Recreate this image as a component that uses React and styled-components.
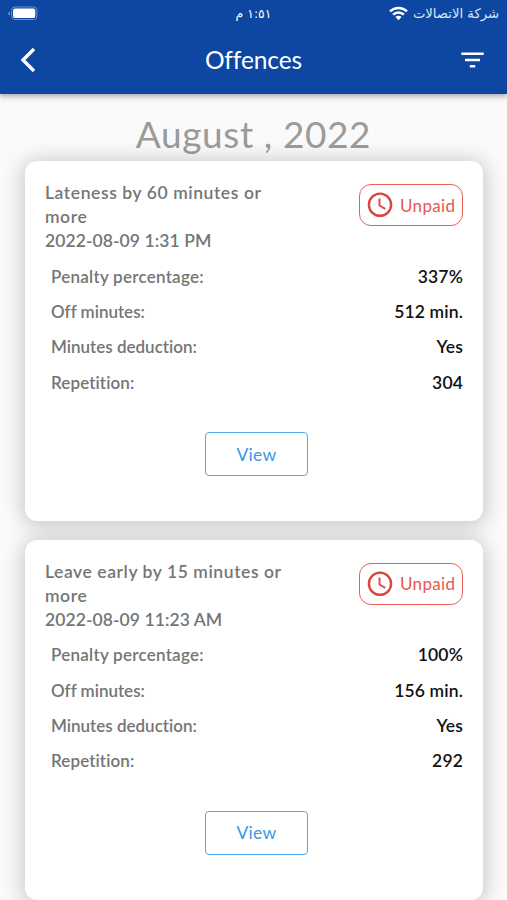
import React from 'react';
import styled, { createGlobalStyle } from 'styled-components';

const GlobalStyle = createGlobalStyle`
  * {
    box-sizing: border-box;
  }

  body {
    margin: 0;
    background: #fafafa;
    font-family: Lato, 'Noto Sans', sans-serif;
    font-variant-ligatures: none;
  }
`;

const Screen = styled.div`
  width: 507px;
  height: 900px;
  overflow: hidden;
  background: #fafafa;
`;

const TopBar = styled.header`
  position: relative;
  height: 94px;
  background: #0d47a1;
  color: #fff;
  box-shadow: 0 2px 4px rgba(0, 0, 0, 0.2), 0 4px 6px rgba(0, 0, 0, 0.12);
`;

const StatusBar = styled.div`
  display: grid;
  grid-template-columns: 1fr auto 1fr;
  align-items: center;
  height: 27px;
  padding: 0 8px 0 8px;
  color: #dbe8fb;
  font-family: 'DejaVu Sans', sans-serif;
`;

const Clock = styled.span`
  color: #fff;
  font-size: 12.5px;
  line-height: 27px;
`;

const Carrier = styled.div`
  display: flex;
  align-items: center;
  justify-content: flex-end;
  gap: 5px;
  font-size: 13.2px;
  line-height: 27px;
  white-space: nowrap;
`;

const Toolbar = styled.div`
  display: grid;
  grid-template-columns: 60px 1fr 60px;
  align-items: center;
  height: 65px;
`;

const IconButton = styled.button`
  display: flex;
  justify-content: ${({ $end }) => ($end ? 'flex-end' : 'flex-start')};
  padding: ${({ $end }) => ($end ? '0 23px 0 0' : '0 0 0 20px')};
  border: 0;
  background: none;
  color: #fff;
`;

const PageTitle = styled.h1`
  margin: 0;
  font-size: 24.5px;
  font-weight: 400;
  line-height: 32px;
  letter-spacing: -0.1px;
  text-align: center;
`;

const Month = styled.h2`
  height: 67px;
  margin: 0;
  padding-top: 17px;
  color: #9b9b9b;
  font-size: 37px;
  font-weight: 400;
  line-height: 46px;
  letter-spacing: 0.6px;
  text-align: center;
`;

const CardList = styled.main`
  display: flex;
  flex-direction: column;
  gap: 18.5px;
  padding: 0 24px 0 25px;
`;

const Card = styled.article`
  height: 360.3px;
  flex-shrink: 0;
  padding: 20px;
  border-radius: 12px;
  background: #fff;
  box-shadow: 0 2px 20px 3px rgba(0, 0, 0, 0.2);
`;

const CardHead = styled.div`
  display: flex;
  justify-content: space-between;
  align-items: flex-start;
  height: 77.5px;
  color: #757575;
`;

const Summary = styled.div`
  width: 246px;
  font-size: 17.5px;
  font-weight: 600;
  line-height: 24px;
`;

const Offence = styled.div`
  letter-spacing: ${({ $spacing }) => $spacing}px;
`;

const Status = styled.div`
  display: flex;
  align-items: center;
  gap: 7.5px;
  width: 104.5px;
  height: 42px;
  margin-top: 3px;
  padding-left: 7px;
  border: 1.3px solid #ec5f56;
  border-radius: 12px;
  color: #e9574e;
  font-size: 17px;
  letter-spacing: 0.35px;
`;

const Row = styled.div`
  display: flex;
  justify-content: space-between;
  height: 35.4px;
  padding-left: 6px;
  color: #757575;
  font-size: 17px;
  font-weight: 600;
  line-height: 35px;
`;

const Label = styled.span`
  letter-spacing: ${({ $spacing }) => $spacing}px;
`;

const Value = styled.span`
  color: #111;
  font-size: 17.5px;
  letter-spacing: 0.15px;
`;

const ViewButton = styled.button`
  display: block;
  width: 103px;
  height: 44px;
  margin: 32px auto 0 160px;
  padding: 0;
  border: 1.5px solid #55a9ea;
  border-radius: 4px;
  background: #fff;
  color: #3b98e0;
  font-family: inherit;
  font-size: 17.5px;
  letter-spacing: 0.3px;
`;

const offences = [
  {
    title: 'Lateness by 60 minutes or more',
    titleSpacing: 0.58,
    date: '2022-08-09 1:31 PM',
    rows: [
      ['Penalty percentage:', '337%'],
      ['Off minutes:', '512 min.'],
      ['Minutes deduction:', 'Yes'],
      ['Repetition:', '304'],
    ],
  },
  {
    title: 'Leave early by 15 minutes or more',
    titleSpacing: 0.57,
    date: '2022-08-09 11:23 AM',
    rows: [
      ['Penalty percentage:', '100%'],
      ['Off minutes:', '156 min.'],
      ['Minutes deduction:', 'Yes'],
      ['Repetition:', '292'],
    ],
  },
];

const labelSpacing = {
  'Penalty percentage:': 0.25,
  'Off minutes:': 0,
  'Minutes deduction:': 0,
  'Repetition:': 0.1,
};

const Battery = () => (
  <svg width="31" height="15" viewBox="0 0 31 15">
    <path d="M1.6 5.5v4C.5 9 .3 8.3.3 7.5s.2-1.5 1.3-2z" fill="#86a3d0" />
    <rect x="3.5" y="1" width="25.5" height="12.5" rx="3.5" fill="none" stroke="#7090c6" />
    <rect x="5" y="2.5" width="22.3" height="9.4" rx="2" fill="#fff" />
  </svg>
);

const Wifi = () => (
  <svg width="19" height="15" viewBox="0 0 19 15">
    <g fill="none" stroke="#fff" strokeWidth="2.5">
      <path d="M1 5.4a12.2 12.2 0 0 1 17 0" />
      <path d="M4.1 8.6a7.8 7.8 0 0 1 10.8 0" />
    </g>
    <path d="M6.4 11a4.4 4.4 0 0 1 6.2 0l-3.1 3.2z" fill="#fff" />
  </svg>
);

const BackIcon = () => (
  <svg width="16" height="26" viewBox="0 0 16 26">
    <path d="M14 2 3 13l11 11" fill="none" stroke="currentColor" strokeWidth="3.4" />
  </svg>
);

const FilterIcon = () => (
  <svg width="23" height="16" viewBox="0 0 23 16">
    <path d="M.3.5h22.4V3.1H.3zM4 6.7h15v2.6H4zM8.8 12.9h5.4v2.6H8.8z" fill="currentColor" />
  </svg>
);

const ClockIcon = () => (
  <svg width="26" height="26" viewBox="0 0 26 26">
    <circle cx="13" cy="12.7" r="11.1" fill="none" stroke="#dc453e" strokeWidth="2.4" />
    <path d="M12.5 6.6v6.9l5.8 3.4" fill="none" stroke="#e04f47" strokeWidth="2" />
  </svg>
);

const OffenceCard = ({ offence }) => (
  <Card>
    <CardHead>
      <Summary>
        <Offence $spacing={offence.titleSpacing}>{offence.title}</Offence>
        <Offence $spacing={0.08}>{offence.date}</Offence>
      </Summary>
      <Status>
        <ClockIcon />
        Unpaid
      </Status>
    </CardHead>
    {offence.rows.map(([label, value]) => (
      <Row key={label}>
        <Label $spacing={labelSpacing[label]}>{label}</Label>
        <Value>{value}</Value>
      </Row>
    ))}
    <ViewButton>View</ViewButton>
  </Card>
);

const App = () => (
  <Screen>
    <GlobalStyle />
    <TopBar>
      <StatusBar>
        <Battery />
        <Clock dir="rtl">١:٥١ م</Clock>
        <Carrier>
          <Wifi />
          <span dir="rtl">شركة الاتصالات</span>
        </Carrier>
      </StatusBar>
      <Toolbar>
        <IconButton aria-label="Back">
          <BackIcon />
        </IconButton>
        <PageTitle>Offences</PageTitle>
        <IconButton $end aria-label="Filter">
          <FilterIcon />
        </IconButton>
      </Toolbar>
    </TopBar>
    <Month>August , 2022</Month>
    <CardList>
      {offences.map((offence) => (
        <OffenceCard key={offence.date} offence={offence} />
      ))}
    </CardList>
  </Screen>
);

export default App;
